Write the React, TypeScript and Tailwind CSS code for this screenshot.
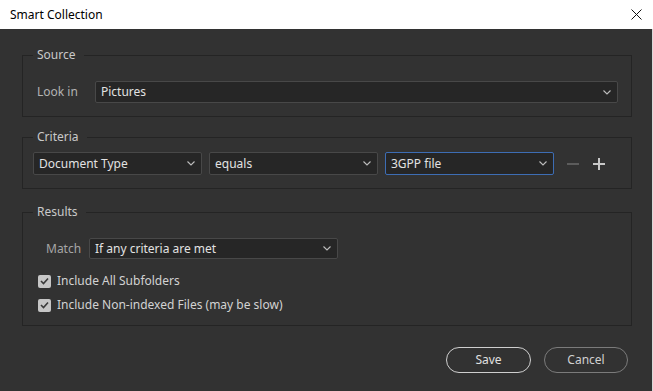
import React from "react";

const font = { fontFamily: '"Segoe UI", "Noto Sans", sans-serif' };

function Chevron() {
  return (
    <svg width="8" height="5" viewBox="0 0 8 5" className="shrink-0">
      <path d="M0.5 0.5 L4 4 L7.5 0.5" fill="none" stroke="#bdbdbd" strokeWidth="1.1" />
    </svg>
  );
}

function Select({
  text,
  className,
  blue,
}: {
  text: string;
  className: string;
  blue?: boolean;
}) {
  return (
    <div
      className={
        "flex items-center justify-between rounded-[2px] border bg-[#262626] pl-[5px] pr-[6px] text-[12px] text-[#e2e2e2] " +
        (blue ? "border-[#3d6db4] " : "border-[#484848] ") +
        className
      }
    >
      <span className="leading-none">{text}</span>
      <Chevron />
    </div>
  );
}

function Check() {
  return (
    <div className="flex h-[13px] w-[13px] items-center justify-center rounded-[2px] bg-[#c6c6c6]">
      <svg width="9" height="8" viewBox="0 0 9 8">
        <path d="M1 4 L3.5 6.5 L8 1.5" fill="none" stroke="#3a3a3a" strokeWidth="1.6" />
      </svg>
    </div>
  );
}

function Group({
  title,
  className,
  children,
}: {
  title: string;
  className: string;
  children: React.ReactNode;
}) {
  return (
    <fieldset className={"ml-[22px] mr-[20px] border border-[#242424] " + className}>
      <legend className="ml-[10px] h-[16px] px-[4px] pr-[8px] text-[12px] leading-[16px] text-[#c9c9c9]">
        {title}
      </legend>
      {children}
    </fieldset>
  );
}

export default function App() {
  return (
    <div className="flex h-[391px] w-[653px] flex-col overflow-hidden bg-[#323232]" style={font}>
      <div className="flex h-[29px] shrink-0 items-center justify-between bg-white pl-[10px] pr-[11px] text-[12px] text-black">
        <span>Smart Collection</span>
        <svg width="11" height="11" viewBox="0 0 11 11">
          <path d="M0.5 0.5 L10.5 10.5 M10.5 0.5 L0.5 10.5" stroke="#111" strokeWidth="1" />
        </svg>
      </div>
      <div className="flex flex-1 flex-col border-r border-[#d8d8d8]">
        <Group title="Source" className="mt-[18px]">
          <div className="flex items-center pb-[13px] pl-[14px] pr-[13px] pt-[18px]">
            <span className="w-[58px] text-[12px] text-[#b3b3b3]">Look in</span>
            <Select text="Pictures" className="h-[22px] flex-1" />
          </div>
        </Group>
        <Group title="Criteria" className="mt-[12px]">
          <div className="flex items-center pb-[13px] pl-[10px] pt-[7px]">
            <Select text="Document Type" className="h-[23px] w-[169px]" />
            <Select text="equals" className="ml-[7px] h-[23px] w-[169px]" />
            <Select text="3GPP file" className="ml-[7px] h-[23px] w-[169px]" blue />
            <div className="ml-[13px] h-[2px] w-[12px] bg-[#5c5c5c]" />
            <svg width="12" height="12" viewBox="0 0 12 12" className="ml-[14px]">
              <path d="M0 6 H12 M6 0 V12" stroke="#c8c8c8" strokeWidth="2" />
            </svg>
          </div>
        </Group>
        <Group title="Results" className="mt-[15px]">
          <div className="flex flex-col pb-[10px] pt-[18px]">
            <div className="flex items-center pl-[23px]">
              <span className="w-[43px] text-[12px] text-[#a6a6a6]">Match</span>
              <Select text="If any criteria are met" className="h-[21px] w-[249px]" />
            </div>
            <div className="mt-[12px] flex h-[20px] items-center pl-[15px]">
              <Check />
              <span className="ml-[6px] text-[12px] text-[#d2d2d2]">Include All Subfolders</span>
            </div>
            <div className="mt-[4px] flex h-[20px] items-center pl-[15px]">
              <Check />
              <span className="ml-[6px] text-[12px] text-[#d2d2d2]">
                Include Non-indexed Files (may be slow)
              </span>
            </div>
          </div>
        </Group>
        <div className="mr-[24px] mt-[21px] flex justify-end gap-[13px]">
          <button className="h-[26px] w-[85px] rounded-full border border-[#cfcfcf] text-[12px] text-[#e0e0e0]">
            Save
          </button>
          <button className="h-[26px] w-[84px] rounded-full border border-[#7b7b7b] text-[12px] text-[#d0d0d0]">
            Cancel
          </button>
        </div>
      </div>
    </div>
  );
}
